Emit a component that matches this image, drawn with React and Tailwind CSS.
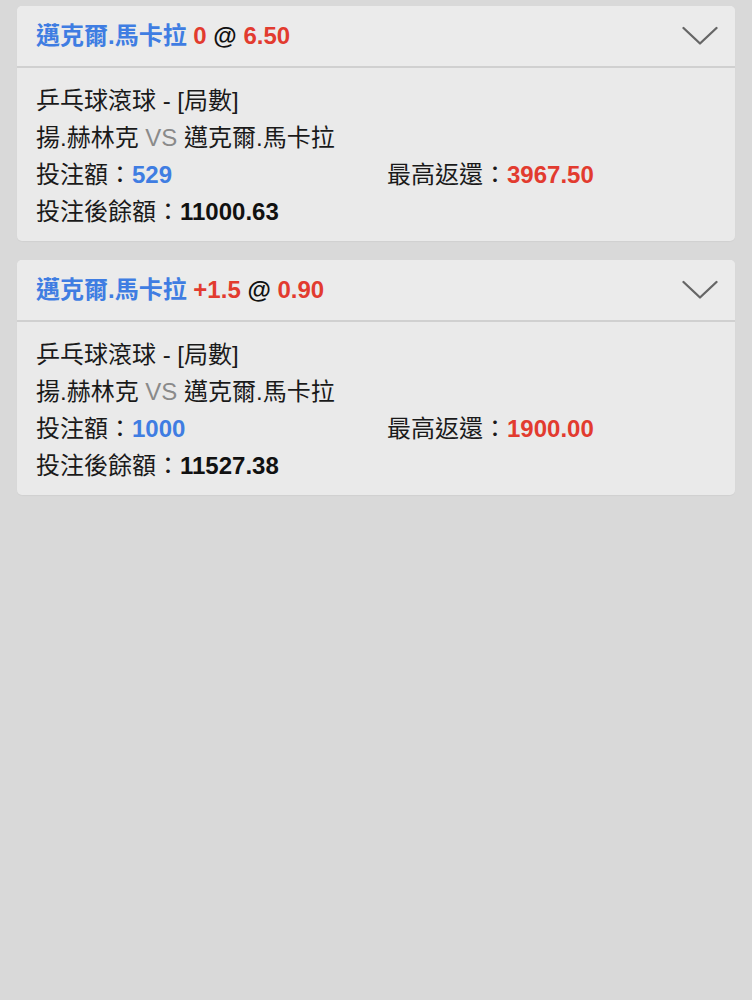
import React from 'react';

const bets = [
  { pick: '邁克爾.馬卡拉', line: '0', odds: '6.50', stake: '529', maxReturn: '3967.50', balance: '11000.63' },
  { pick: '邁克爾.馬卡拉', line: '+1.5', odds: '0.90', stake: '1000', maxReturn: '1900.00', balance: '11527.38' },
];

function Chevron() {
  return (
    <svg width="36" height="20" viewBox="0 0 36 20" fill="none">
      <path d="M1.5 2 L18 17.5 L34.5 2" stroke="#666666" strokeWidth="2.3" strokeLinecap="round" strokeLinejoin="round" />
    </svg>
  );
}

function BetCard({ bet }) {
  return (
    <div className="bg-[#eaeaea] rounded-[5px] overflow-hidden shadow-[0_1px_1px_rgba(0,0,0,0.04)]">
      <div className="h-[62px] flex items-center justify-between pl-[19px] pr-[17px] border-b-2 border-[#d0d0d0] bg-[#ebebeb]">
        <div className="text-[24px] font-bold leading-none">
          <span className="text-[#3f7de2]">{bet.pick}</span>
          <span className="text-[#e23b2f]"> {bet.line}</span>
          <span className="text-[#111]"> @ </span>
          <span className="text-[#e23b2f]">{bet.odds}</span>
        </div>
        <Chevron />
      </div>
      <div className="pl-[19px] pr-4 pt-[14px] pb-[11px] text-[24px] leading-[37px] text-[#1a1a1a]">
        <div>乒乓球滾球 - [局數]</div>
        <div>
          揚.赫林克 <span className="text-[#8a8a8a]">VS</span> 邁克爾.馬卡拉
        </div>
        <div className="flex">
          <div className="w-[351px]">
            投注額：<span className="font-bold text-[#3f7de2]">{bet.stake}</span>
          </div>
          <div>
            最高返還：<span className="font-bold text-[#e23b2f]">{bet.maxReturn}</span>
          </div>
        </div>
        <div>
          投注後餘額：<span className="font-bold text-[#111]">{bet.balance}</span>
        </div>
      </div>
    </div>
  );
}

export default function App() {
  return (
    <div
      className="min-h-[1000px] bg-[#d9d9d9] pt-[6px] px-[17px] flex flex-col gap-[19px]"
      style={{ fontFamily: '"Liberation Sans", "Noto Sans CJK TC", sans-serif' }}
    >
      {bets.map((bet, i) => (
        <BetCard key={i} bet={bet} />
      ))}
    </div>
  );
}
